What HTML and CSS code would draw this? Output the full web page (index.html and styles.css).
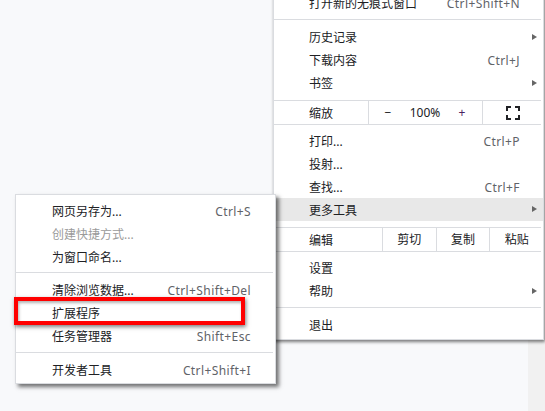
FILE: index.html
```html
<!DOCTYPE html>
<html lang="zh-CN">
<head>
  <meta charset="UTF-8">
  <title>更多工具</title>
  <link rel="stylesheet" href="styles.css">
</head>
<body>
  <div class="scroll-strip"></div>

  <!-- Main browser menu -->
  <div class="menu main-menu">
    <div class="row"><span>打开新的无痕式窗口</span><span class="key">Ctrl+Shift+N</span></div>
    <div class="sep mt4 mb6"></div>
    <div class="row"><span>历史记录</span><i class="arrow"></i></div>
    <div class="row"><span>下载内容</span><span class="key">Ctrl+J</span></div>
    <div class="row"><span>书签</span><i class="arrow"></i></div>
    <div class="sep mb0"></div>
    <div class="row cells zoom-row">
      <span class="cell-label">缩放</span>
      <div class="zoom-controls"><span>−</span><span class="zoom-value">100%</span><span class="plus">+</span></div>
      <div class="fullscreen">
        <svg width="14" height="14" viewBox="0 0 14 14" fill="none" stroke="#202124" stroke-width="2">
          <path d="M1 5V1H5M9 1H13V5M13 9V13H9M5 13H1V9"/>
        </svg>
      </div>
    </div>
    <div class="sep mt0 mb4"></div>
    <div class="row low"><span>打印...</span><span class="key">Ctrl+P</span></div>
    <div class="row low"><span>投射...</span></div>
    <div class="row low"><span>查找...</span><span class="key">Ctrl+F</span></div>
    <div class="row low active"><span>更多工具</span><i class="arrow"></i></div>
    <div class="sep mt6 mb0"></div>
    <div class="row cells edit-row">
      <span class="cell-label">编辑</span>
      <span class="cell">剪切</span>
      <span class="cell">复制</span>
      <span class="cell">粘贴</span>
    </div>
    <div class="sep mt0"></div>
    <div class="row"><span>设置</span></div>
    <div class="row"><span>帮助</span><i class="arrow"></i></div>
    <div class="sep mt4 mb6"></div>
    <div class="row"><span>退出</span></div>
  </div>

  <!-- Submenu -->
  <div class="menu sub-menu">
    <div class="row"><span>网页另存为...</span><span class="key">Ctrl+S</span></div>
    <div class="row disabled"><span>创建快捷方式...</span></div>
    <div class="row"><span>为窗口命名...</span></div>
    <div class="sep mt3 mb6"></div>
    <div class="row"><span>清除浏览数据...</span><span class="key">Ctrl+Shift+Del</span></div>
    <div class="row"><span>扩展程序</span></div>
    <div class="row"><span>任务管理器</span><span class="key">Shift+Esc</span></div>
    <div class="sep mt4 mb6"></div>
    <div class="row"><span>开发者工具</span><span class="key">Ctrl+Shift+I</span></div>
  </div>

  <div class="highlight-box"></div>
</body>
</html>
```

FILE: styles.css
```css
* {
  margin: 0;
  padding: 0;
  box-sizing: border-box;
}

body {
  width: 545px;
  height: 411px;
  overflow: hidden;
  position: relative;
  background-color: #f8f9fb;
  font-family: "Noto Sans", "Noto Sans CJK SC", sans-serif;
  font-size: 12px;
  color: #202124;
}

.scroll-strip {
  position: absolute;
  top: 0;
  right: 0;
  bottom: 0;
  width: 17px;
  background-color: #f1f1f1;
}

.menu {
  position: absolute;
  background-color: #fff;
  border: 1px solid #dadce0;
}

.main-menu {
  left: 273px;
  top: -9px;
  width: 271px;
  height: 349px;
  box-shadow: 1px 2px 3px rgba(0, 0, 0, 0.5);
}

.sub-menu {
  left: 15px;
  top: 194px;
  width: 261px;
  height: 190px;
  padding-top: 5px;
  box-shadow: 3px 3px 4px rgba(0, 0, 0, 0.55);
}

.row {
  height: 23px;
  display: flex;
  align-items: center;
  justify-content: space-between;
  position: relative;
  line-height: 23px;
}

.main-menu .row {
  padding: 0 23px 0 35px;
}

.sub-menu .row {
  padding: 0 24px 0 36px;
}

.low > span {
  padding-top: 2px;
}

.key {
  color: #5f6368;
  letter-spacing: 0.4px;
}

.disabled {
  color: #9a9a9a;
}

.active {
  background-color: #e8e8e8;
}

.arrow {
  position: absolute;
  right: 6px;
  top: 8px;
  width: 0;
  height: 0;
  border-left: 5px solid #666;
  border-top: 3.5px solid transparent;
  border-bottom: 3.5px solid transparent;
}

.sep {
  height: 1px;
  margin: 5px 2px 5px 0;
  background-color: #dadce0;
}

.mt0 { margin-top: 0; }
.mt3 { margin-top: 3px; }
.mt4 { margin-top: 4px; }
.mt6 { margin-top: 6px; }
.mb0 { margin-bottom: 0; }
.mb4 { margin-bottom: 4px; }
.mb6 { margin-bottom: 6px; }

.main-menu .cells {
  padding: 0 0 0 35px;
  justify-content: flex-start;
}

.cell-label {
  flex: none;
  padding-top: 2px;
}

.zoom-row .cell-label {
  width: 59px;
}

.zoom-controls {
  width: 115px;
  height: 23px;
  display: flex;
  align-items: center;
  border-left: 1px solid #dadce0;
  border-right: 1px solid #dadce0;
}

.zoom-controls span {
  text-align: center;
}

.zoom-controls span:first-child {
  width: 38px;
}

.zoom-value {
  width: 36px;
}

.plus {
  width: 38px;
  color: #4a2360;
}

.fullscreen {
  flex: 1;
  height: 23px;
  display: flex;
  align-items: center;
  justify-content: center;
}

.edit-row .cell-label {
  width: 73px;
}

.cell {
  width: 54px;
  height: 23px;
  text-align: center;
  border-left: 1px solid #dadce0;
}

.highlight-box {
  position: absolute;
  left: 14px;
  top: 297px;
  width: 231px;
  height: 28px;
  border: 4px solid #f00;
  box-shadow: 1px 2px 4px rgba(0, 0, 0, 0.5), inset 1px 2px 3px rgba(0, 0, 0, 0.3);
}
```
